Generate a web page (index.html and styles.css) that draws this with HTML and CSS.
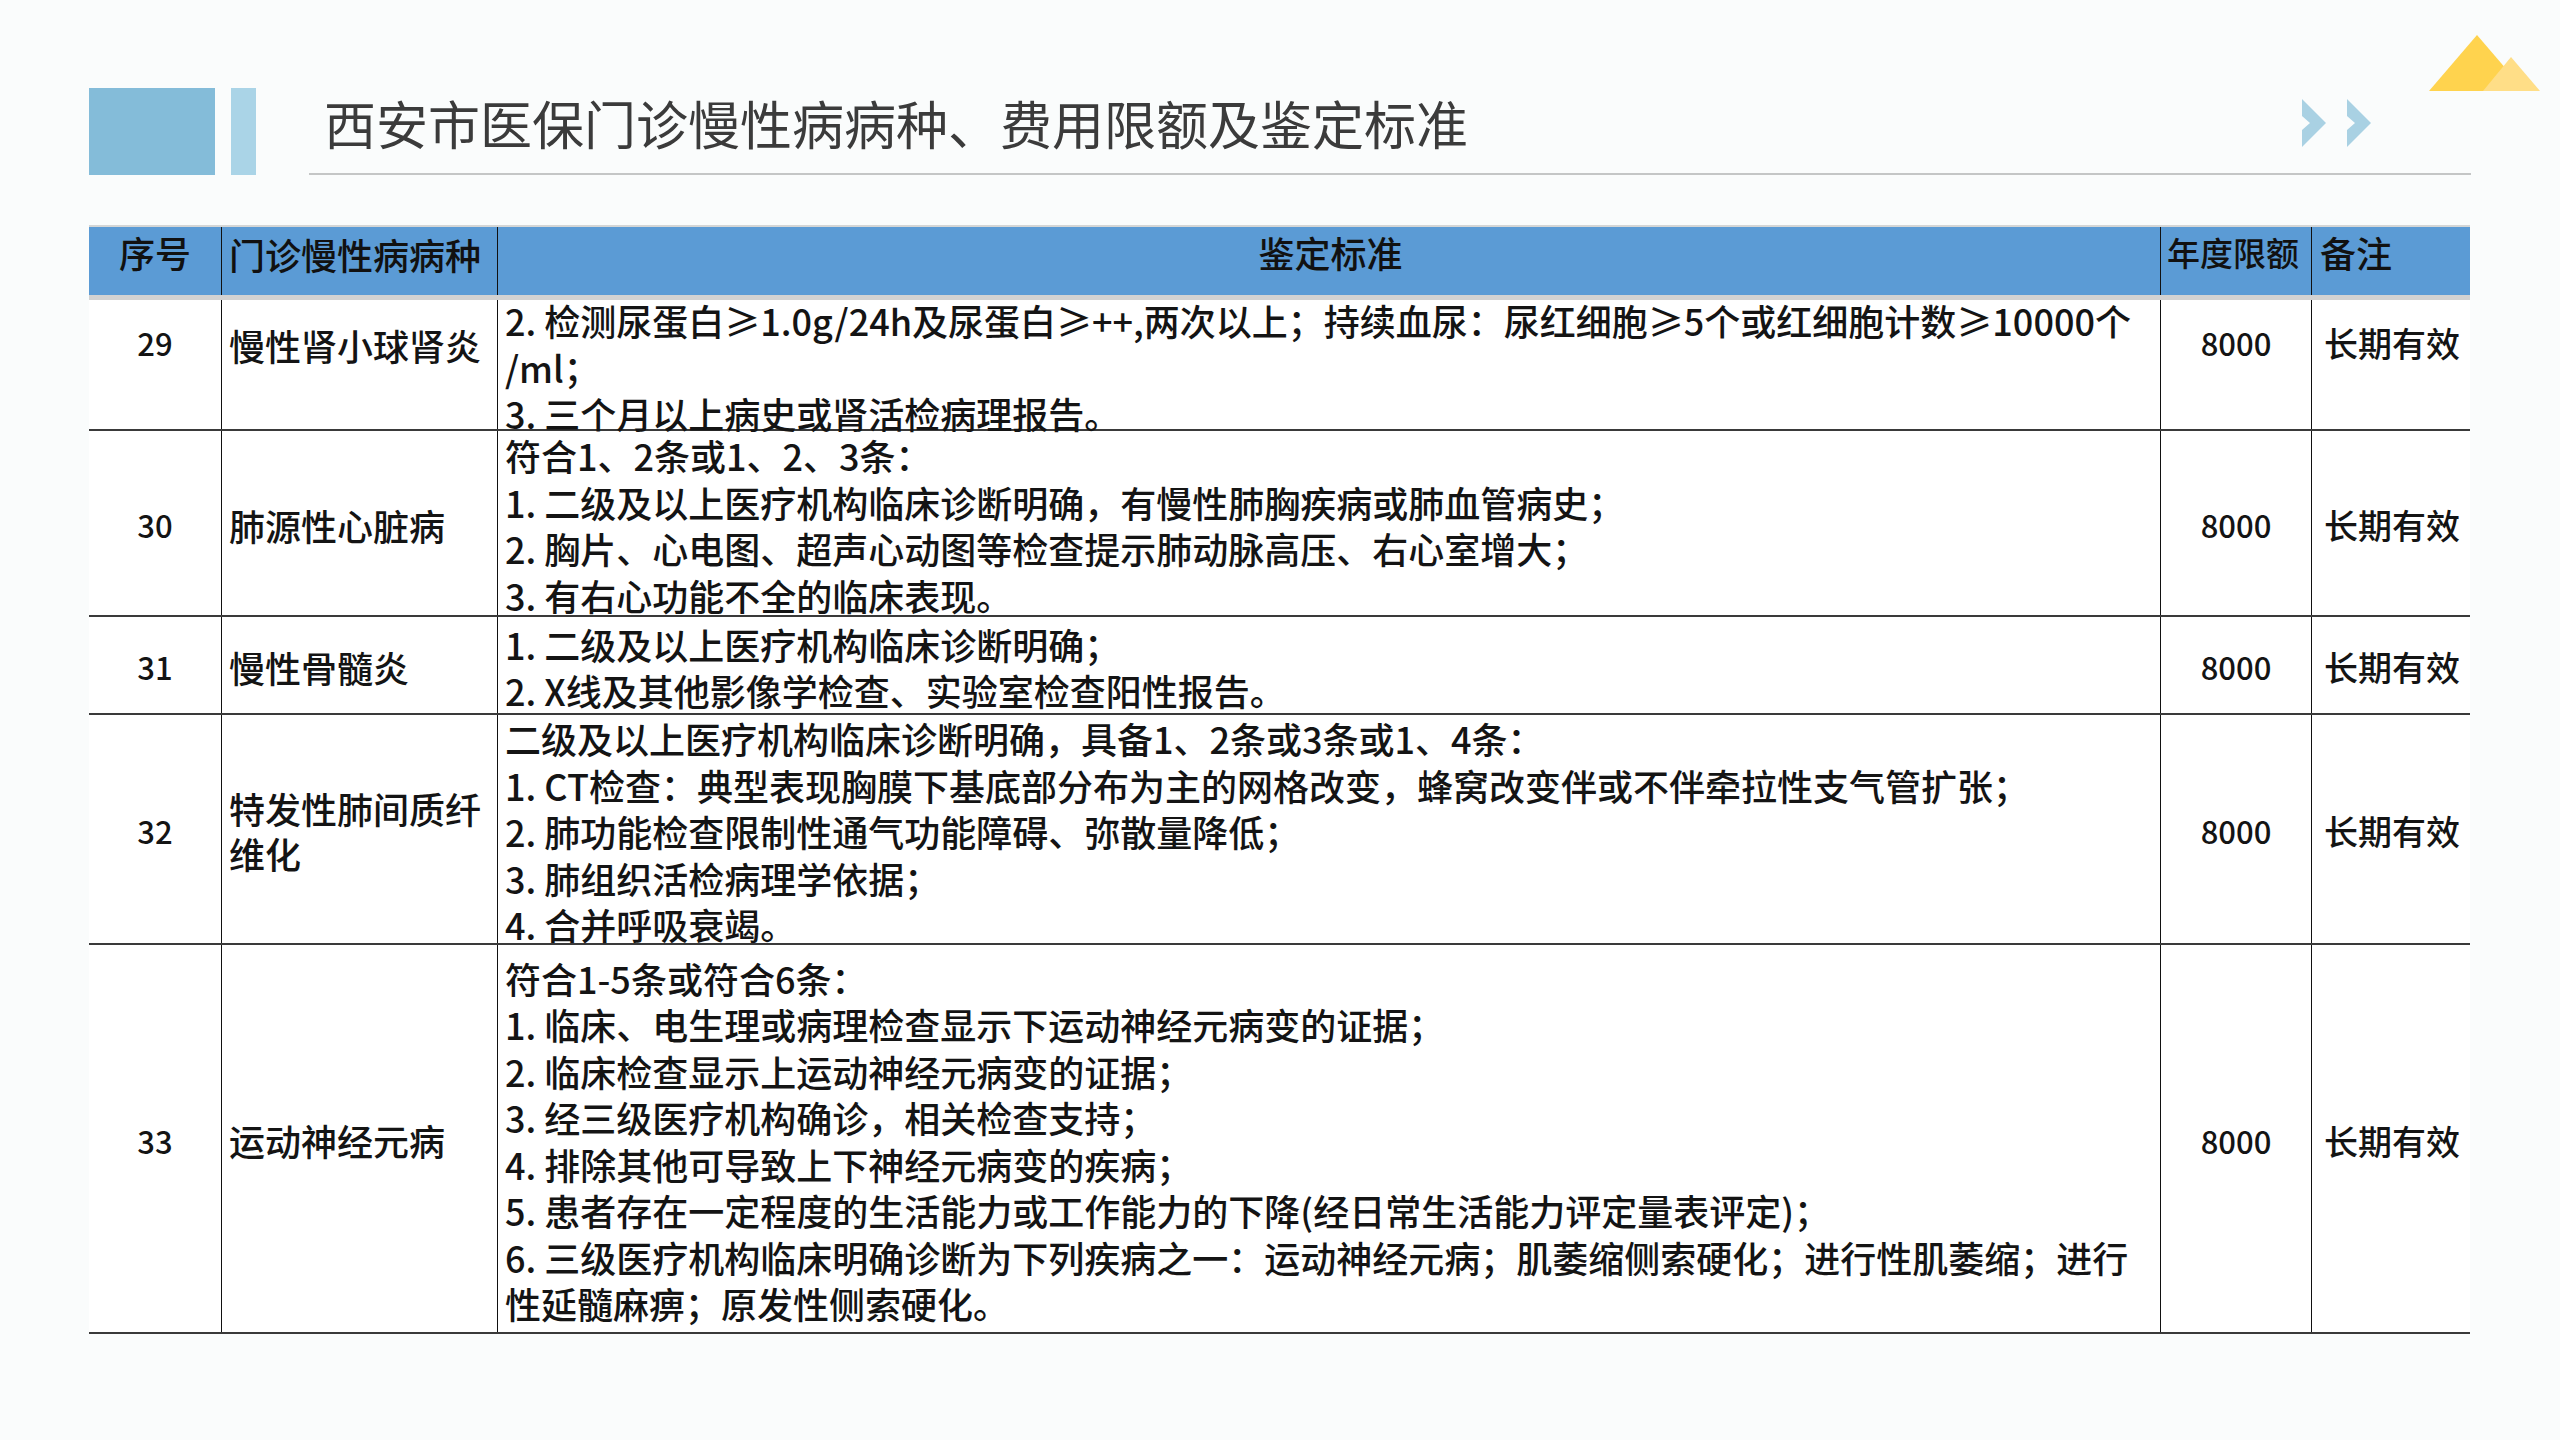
FILE: index.html
```html
<!DOCTYPE html>
<html lang="zh-CN">
<head>
<meta charset="utf-8">
<title>西安市医保门诊慢性病病种、费用限额及鉴定标准</title>
<link rel="stylesheet" href="styles.css">
</head>
<body>
<div class="slide">
  <svg class="peaks" width="112" height="56" viewBox="0 0 112 56" aria-hidden="true">
    <polygon points="0,56 48,0 96,56" fill="#ffd34e"/>
    <polygon points="54,56 82,22 111,56" fill="#ffde87"/>
  </svg>

  <header class="top">
    <div class="mark-block"></div>
    <div class="mark-bar"></div>
    <div class="title-wrap">
      <h1 class="title">西安市医保门诊慢性病病种、费用限额及鉴定标准</h1>
      <div class="chevrons">
        <svg width="24" height="48" viewBox="0 0 24 48"><polygon points="0,0 24,24 0,48 0,31 8,24 0,17" fill="#a9d1e3"/></svg>
        <svg width="24" height="48" viewBox="0 0 24 48"><polygon points="0,0 24,24 0,48 0,31 8,24 0,17" fill="#a9d1e3"/></svg>
      </div>
    </div>
  </header>

  <div class="table">
    <div class="row head">
      <div class="cell c-num">序号</div>
      <div class="cell c-name">门诊慢性病病种</div>
      <div class="cell c-std">鉴定标准</div>
      <div class="cell c-limit">年度限额</div>
      <div class="cell c-note">备注</div>
    </div>

    <div class="row r29">
      <div class="cell c-num">29</div>
      <div class="cell c-name">慢性肾小球肾炎</div>
      <div class="cell c-std">
        <div>2. 检测尿蛋白≥1.0g/24h及尿蛋白≥++,两次以上；持续血尿：尿红细胞≥5个或红细胞计数≥10000个</div>
        <div>/ml；</div>
        <div>3. 三个月以上病史或肾活检病理报告。</div>
      </div>
      <div class="cell c-limit">8000</div>
      <div class="cell c-note">长期有效</div>
    </div>

    <div class="row r30">
      <div class="cell c-num">30</div>
      <div class="cell c-name">肺源性心脏病</div>
      <div class="cell c-std">
        <div>符合1、2条或1、2、3条：</div>
        <div>1. 二级及以上医疗机构临床诊断明确，有慢性肺胸疾病或肺血管病史；</div>
        <div>2. 胸片、心电图、超声心动图等检查提示肺动脉高压、右心室增大；</div>
        <div>3. 有右心功能不全的临床表现。</div>
      </div>
      <div class="cell c-limit">8000</div>
      <div class="cell c-note">长期有效</div>
    </div>

    <div class="row r31">
      <div class="cell c-num">31</div>
      <div class="cell c-name">慢性骨髓炎</div>
      <div class="cell c-std">
        <div>1. 二级及以上医疗机构临床诊断明确；</div>
        <div>2. X线及其他影像学检查、实验室检查阳性报告。</div>
      </div>
      <div class="cell c-limit">8000</div>
      <div class="cell c-note">长期有效</div>
    </div>

    <div class="row r32">
      <div class="cell c-num">32</div>
      <div class="cell c-name">特发性肺间质纤维化</div>
      <div class="cell c-std">
        <div>二级及以上医疗机构临床诊断明确，具备1、2条或3条或1、4条：</div>
        <div>1. CT检查：典型表现胸膜下基底部分布为主的网格改变，蜂窝改变伴或不伴牵拉性支气管扩张；</div>
        <div>2. 肺功能检查限制性通气功能障碍、弥散量降低；</div>
        <div>3. 肺组织活检病理学依据；</div>
        <div>4. 合并呼吸衰竭。</div>
      </div>
      <div class="cell c-limit">8000</div>
      <div class="cell c-note">长期有效</div>
    </div>

    <div class="row r33">
      <div class="cell c-num">33</div>
      <div class="cell c-name">运动神经元病</div>
      <div class="cell c-std">
        <div>符合1-5条或符合6条：</div>
        <div>1. 临床、电生理或病理检查显示下运动神经元病变的证据；</div>
        <div>2. 临床检查显示上运动神经元病变的证据；</div>
        <div>3. 经三级医疗机构确诊，相关检查支持；</div>
        <div>4. 排除其他可导致上下神经元病变的疾病；</div>
        <div>5. 患者存在一定程度的生活能力或工作能力的下降(经日常生活能力评定量表评定)；</div>
        <div>6. 三级医疗机构临床明确诊断为下列疾病之一：运动神经元病；肌萎缩侧索硬化；进行性肌萎缩；进行</div>
        <div>性延髓麻痹；原发性侧索硬化。</div>
      </div>
      <div class="cell c-limit">8000</div>
      <div class="cell c-note">长期有效</div>
    </div>
  </div>
</div>
</body>
</html>
```

FILE: styles.css
```css
* { box-sizing: border-box; }

html, body {
  margin: 0;
  padding: 0;
}

body {
  width: 2560px;
  height: 1440px;
  background: #fafcfc;
  font-family: "Noto Sans CJK SC", "Liberation Sans", sans-serif;
  color: #141414;
  overflow: hidden;
}

.slide {
  position: relative;
  width: 2560px;
  height: 1440px;
  padding: 88px 0 0 89px;
}

.peaks {
  position: absolute;
  left: 2429px;
  top: 35px;
}

/* ---------- header ---------- */
.top {
  display: flex;
  align-items: stretch;
  height: 87px;
}

.mark-block {
  width: 126px;
  background: #84bcd9;
}

.mark-bar {
  width: 25px;
  margin-left: 16px;
  background: #aad4e7;
}

.title-wrap {
  margin-left: 53px;
  width: 2162px;
  display: flex;
  align-items: center;
  justify-content: space-between;
  border-bottom: 2px solid #c4c6c6;
  padding: 0 100px 15px 15px;
}

.title {
  margin: 0;
  font-family: "Noto Sans CJK SC", sans-serif;
  font-weight: 400;
  font-size: 52px;
  line-height: 60px;
  color: #3b3b3b;
}

.chevrons {
  display: flex;
  gap: 21px;
}

.chevrons svg { display: block; }

/* ---------- table ---------- */
.table {
  margin-top: 50px;
  width: 2381px;
}

.row {
  display: grid;
  grid-template-columns: 133px 276px 1663px 151px 158px;
  grid-template-rows: minmax(0, 1fr);
  background: #ffffff;
  border-bottom: 2px solid #3a3a3a;
}

.cell {
  display: flex;
  flex-direction: column;
  justify-content: center;
  min-height: 0;
  border-right: 1px solid #111;
  font-size: 36px;
  font-weight: 500;
  line-height: 40px;
  padding: 4px 4px 0 7px;
  white-space: nowrap;
}

.cell:last-child { border-right: none; }

.c-std { gap: 6.5px; }

.c-num {
  align-items: center;
  padding-left: 0;
  padding-right: 0;
  font-size: 31px;
}

.c-name {
  white-space: normal;
  line-height: 45px;
}

.c-limit {
  align-items: center;
  padding-left: 0;
  padding-right: 0;
  font-size: 31px;
}

.c-note {
  align-items: center;
  padding-left: 2px;
  padding-right: 0;
  font-size: 34px;
}

/* header row */
.row.head {
  height: 75px;
  background: #5b9bd5;
  border-top: 2px solid #d4d6d6;
  border-bottom: 5px solid #d2d2d2;
}

.head .cell {
  justify-content: flex-start;
  padding-top: 5px;
  font-size: 36px;
  color: #111;
}

.head .c-num { align-items: center; }
.head .c-std { align-items: center; }
.head .c-limit { align-items: flex-start; padding-left: 6px; font-size: 33px; }
.head .c-note { align-items: flex-start; padding-left: 8px; }

/* body rows */
.r29 { height: 131px; }
.r30 { height: 186px; }
.r31 { height: 98px; }
.r32 { height: 230px; }
.r33 { height: 389px; }

.r29 .cell {
  justify-content: flex-start;
  padding-top: 23px;
}

.r29 .c-std { padding-top: 0; }
```
